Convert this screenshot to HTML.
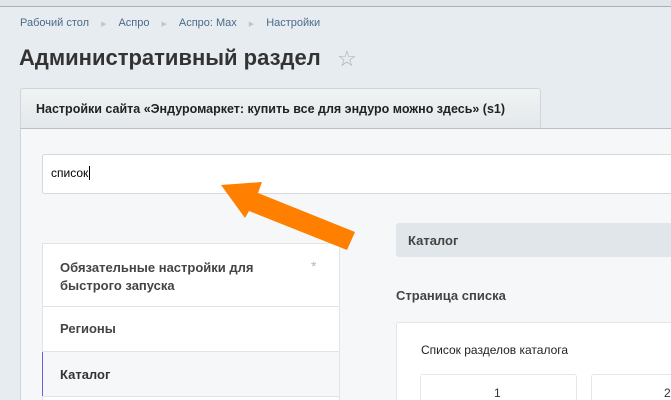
<!DOCTYPE html>
<html style="overflow:hidden;width:671px;height:400px"><head><meta charset="utf-8"><style>
body{margin:0;width:671px;height:400px;overflow:hidden;background:#e6ecef;font-family:"Liberation Sans",sans-serif;position:relative}
.a{position:absolute}
</style></head><body>
<div class="a" style="left:0;top:0;width:671px;height:6px;background:#dfe5e8;border-bottom:1px solid #a9b1b5"></div>
<div class="a" style="left:20px;top:17px;font-size:11px;color:#4c6a89;white-space:nowrap">Рабочий стол<span style="color:#c0c7cb;margin:0 12px;font-size:7px">▶</span>Аспро<span style="color:#c0c7cb;margin:0 12px;font-size:7px">▶</span>Аспро: Max<span style="color:#c0c7cb;margin:0 12px;font-size:7px">▶</span>Настройки</div>
<div class="a" style="left:19px;top:45px;font-size:22px;font-weight:bold;color:#333;white-space:nowrap">Административный раздел</div>
<div class="a" style="left:337px;top:46px;font-size:22px;color:#a8b0b5">☆</div>
<div class="a" style="left:20px;top:88px;width:519px;height:40px;background:linear-gradient(#f0f3f4,#e3e8ea);border:1px solid #cfd6d9;border-bottom:none;border-radius:3px 3px 0 0"></div>
<div class="a" style="left:36px;top:102px;font-size:12.5px;font-weight:bold;color:#222;white-space:nowrap">Настройки сайта «Эндуромаркет: купить все для эндуро можно здесь» (s1)</div>
<div class="a" style="left:20px;top:128px;width:651px;height:272px;background:#f5f7f8;border-top:1px solid #b9c0c4;border-left:1px solid #cfd6d9"></div>
<div class="a" style="left:42px;top:154px;width:629px;height:38px;background:#fff;border:1px solid #d3d9dc;border-right:none;border-radius:3px 0 0 3px"></div>
<div class="a" style="left:51px;top:166px;font-size:12px;color:#000">список<span style="border-left:1px solid #000;margin-left:1px"></span></div>
<div class="a" style="left:42px;top:243px;width:296px;height:157px;background:#fff;border:1px solid #dfe4e7;border-bottom:none"></div>
<div class="a" style="left:42px;top:306px;width:297px;height:1px;background:#dfe4e7"></div>
<div class="a" style="left:42px;top:351px;width:297px;height:1px;background:#dfe4e7"></div>
<div class="a" style="left:42px;top:352px;width:296px;height:44px;background:#f5f7f8;border-left:1px solid #7b57d9"></div>
<div class="a" style="left:42px;top:396px;width:297px;height:1px;background:#dfe4e7"></div>
<div class="a" style="left:60px;top:259px;font-size:13px;font-weight:bold;color:#444;line-height:18px">Обязательные настройки для<br>быстрого запуска</div>
<div class="a" style="left:311px;top:258px;font-size:14px;color:#b0bcc2">*</div>
<div class="a" style="left:60px;top:321px;font-size:13px;font-weight:bold;color:#444">Регионы</div>
<div class="a" style="left:60px;top:367px;font-size:13px;font-weight:bold;color:#333">Каталог</div>
<div class="a" style="left:396px;top:223px;width:275px;height:34px;background:#e0e6e9;border-radius:3px 0 0 3px"></div>
<div class="a" style="left:408px;top:233px;font-size:13px;font-weight:bold;color:#444">Каталог</div>
<div class="a" style="left:396px;top:288px;font-size:13px;font-weight:bold;color:#444">Страница списка</div>
<div class="a" style="left:396px;top:322px;width:275px;height:78px;background:#fff;border:1px solid #e0e5e8;border-right:none;border-bottom:none;border-radius:3px 0 0 0"></div>
<div class="a" style="left:421px;top:343px;font-size:12px;color:#222">Список разделов каталога</div>
<div class="a" style="left:420px;top:374px;width:155px;height:26px;background:#fff;border:1px solid #e3e7ea;border-bottom:none;border-radius:3px 3px 0 0"></div>
<div class="a" style="left:591px;top:374px;width:80px;height:26px;background:#fff;border:1px solid #e3e7ea;border-bottom:none;border-right:none;border-radius:3px 0 0 0"></div>
<div class="a" style="left:494px;top:386px;font-size:12px;color:#333">1</div>
<div class="a" style="left:664px;top:386px;font-size:12px;color:#333">2</div>
<svg class="a" style="left:0;top:0" width="671" height="400"><polygon points="221,185 262,182 258,193 355,232 347,250 249,211 245,218" fill="#ff7f00"/></svg>
</body></html>
